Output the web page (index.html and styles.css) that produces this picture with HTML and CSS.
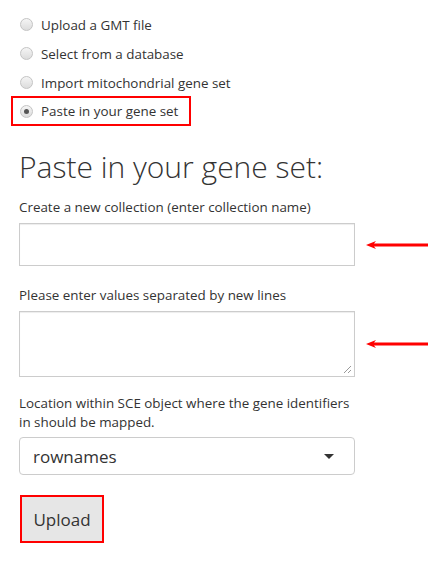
FILE: index.html
```html
<!DOCTYPE html>
<html>
<head>
<meta charset="utf-8">
<link rel="stylesheet" href="styles.css">
</head>
<body>
<div class="page">
  <div class="radios">
    <label class="radio"><span class="dot"></span><span>Upload a GMT file</span></label>
    <label class="radio"><span class="dot"></span><span>Select from a database</span></label>
    <label class="radio"><span class="dot"></span><span>Import mitochondrial gene set</span></label>
    <label class="radio radio-hl"><span class="dot checked"></span><span>Paste in your gene set</span></label>
  </div>
  <h3 class="title">Paste in your gene set:</h3>
  <div class="field field-name">
    <div class="label">Create a new collection (enter collection name)</div>
    <div class="row">
      <div class="input"></div>
      <svg class="arrow" width="62" height="10" viewBox="0 0 62 10"><path d="M0 5 L10 1 L8 3.5 L62 3.5 L62 6.5 L8 6.5 L10 9 Z" fill="#f00"/></svg>
    </div>
  </div>
  <div class="field field-values">
    <div class="label">Please enter values separated by new lines</div>
    <div class="row">
      <div class="input textarea">
        <svg class="grip" width="10" height="10" viewBox="0 0 10 10"><path d="M9 2 L2 9 M9 6 L6 9" stroke="#999" stroke-width="1"/></svg>
      </div>
      <svg class="arrow" width="62" height="10" viewBox="0 0 62 10"><path d="M0 5 L10 1 L8 3.5 L62 3.5 L62 6.5 L8 6.5 L10 9 Z" fill="#f00"/></svg>
    </div>
  </div>
  <div class="field field-loc">
    <div class="label">Location within SCE object where the gene identifiers in should be mapped.</div>
    <div class="select"><span>rownames</span><span class="caret"></span></div>
  </div>
  <button class="btn">Upload</button>
</div>
</body>
</html>
```
FILE: styles.css
```css
html, body { margin: 0; padding: 0; background: #fff; }
body { font-family: "Open Sans", sans-serif; color: #333; font-size: 13.4px; }
.page { padding: 10px 0 0 19px; width: 336px; }
.radios { display: flex; flex-direction: column; }
.radio { display: flex; align-items: center; gap: 8px; height: 29px; padding-left: 1px; color: #333; }
.radio-hl { margin-left: -8px; padding-left: 7px; width: 169px; border: 2px solid #f00; height: 26px; margin-top: -1px; }
.dot { width: 11px; height: 11px; border-radius: 50%; border: 1px solid #c4c4c4; background: linear-gradient(#f5f5f5, #dcdcdc); box-sizing: content-box; position: relative; flex: none; }
.dot.checked::after { content: ""; position: absolute; left: 3px; top: 3px; width: 5px; height: 5px; border-radius: 50%; background: #555; }
.title { font-size: 30px; font-weight: 300; margin: 22px 0 0; line-height: 38px; color: #333; }
.label { line-height: 19px; margin-bottom: 6px; }
.field-name { margin-top: 12px; }
.field-values { margin-top: 20px; }
.field-loc { margin-top: 17px; }
.field-loc .label { margin-bottom: 5px; }
.row { display: flex; align-items: center; gap: 11px; width: 420px; }
.input { width: 334px; height: 41px; border: 1px solid #ccc; box-shadow: inset 0 1px 1px rgba(0,0,0,.075); flex: none; position: relative; }
.textarea { height: 64px; }
.grip { position: absolute; right: 2px; bottom: 2px; }
.select { width: 336px; box-sizing: border-box; height: 38px; border: 1px solid #ccc; border-radius: 4px; display: flex; align-items: center; justify-content: space-between; padding: 0 20px 0 13px; font-size: 17px; color: #333; }
.caret { width: 0; height: 0; border-left: 5px solid transparent; border-right: 5px solid transparent; border-top: 5px solid #333; }
.btn { display: block; margin-top: 20px; margin-left: 1px; font-family: "Open Sans", sans-serif; font-size: 17px; color: #333; background: #e6e6e6; border: 2px solid #f00; width: 84px; height: 48px; padding: 0; }
```
